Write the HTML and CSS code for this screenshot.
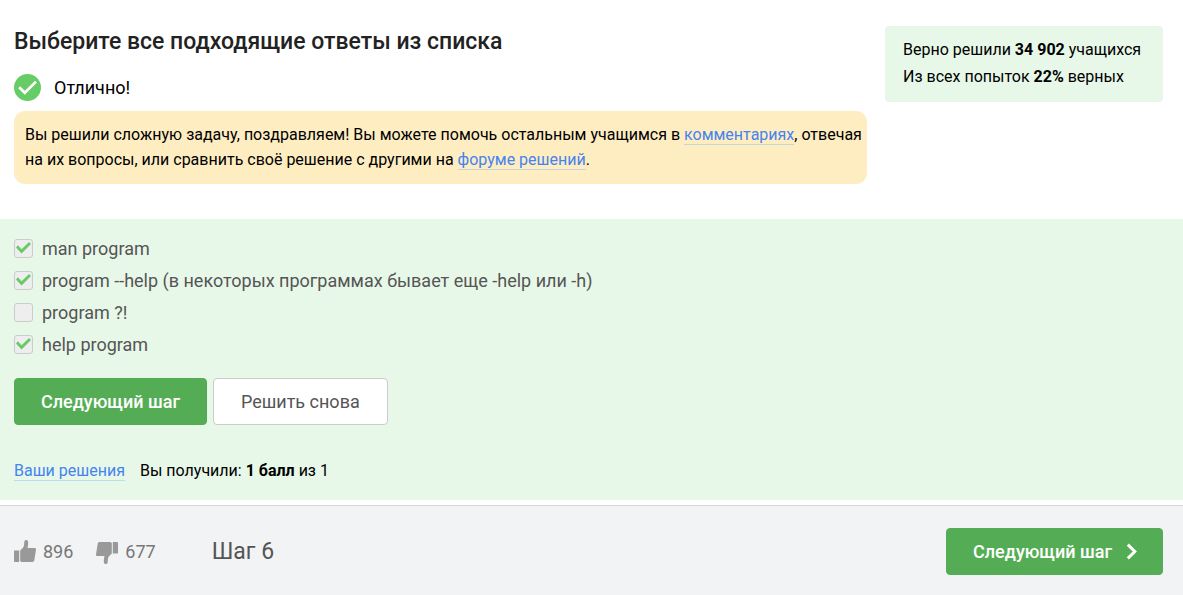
FILE: index.html
```html
<!DOCTYPE html>
<html lang="ru">
<head>
<meta charset="utf-8">
<meta name="viewport" content="width=device-width, initial-scale=1">
<title>Шаг 6</title>
<link rel="stylesheet" href="styles.css">
</head>
<body>
<main>
  <section class="intro">
    <div class="intro-main">
      <h1 class="title">Выберите все подходящие ответы из списка</h1>
      <div class="status">
        <svg class="status-icon" viewBox="0 0 27 27" aria-hidden="true"><circle cx="13.5" cy="13.5" r="13.5" fill="#66cc66"/><path d="M5.2 13.2l5.6 5.6L22 7.6" fill="none" stroke="#fff" stroke-width="2.7"/></svg>
        <span>Отлично!</span>
      </div>
      <p class="note">Вы решили сложную задачу, поздравляем! Вы можете помочь остальным учащимся в <a class="link" href="#comments">комментариях</a>, отвечая на их вопросы, или сравнить своё решение с другими на <a class="link" href="#solutions">форуме решений</a>.</p>
    </div>
    <aside class="stats">
      <div>Верно решили <b>34 902</b> учащихся</div>
      <div>Из всех попыток <b>22%</b> верных</div>
    </aside>
  </section>

  <section class="quiz">
    <div class="options">
      <label class="option"><input class="check" type="checkbox" checked disabled>man program</label>
      <label class="option"><input class="check" type="checkbox" checked disabled>program --help (в некоторых программах бывает еще -help или -h)</label>
      <label class="option"><input class="check" type="checkbox" disabled>program ?!</label>
      <label class="option"><input class="check" type="checkbox" checked disabled>help program</label>
    </div>
    <div class="actions">
      <button class="button button-primary" type="button">Следующий шаг</button>
      <button class="button button-outline" type="button">Решить снова</button>
    </div>
    <div class="result">
      <a class="link" href="#submissions">Ваши решения</a>
      <span>Вы получили: <b>1 балл</b> из 1</span>
    </div>
  </section>
</main>

<footer class="footer">
  <button class="vote" type="button" aria-label="Нравится: 896">
    <svg class="vote-icon" viewBox="0 0 22 24" aria-hidden="true"><path d="M0 10.4h5.2V22H.8a.8.8 0 0 1-.8-.8z"/><path d="M6.2 21V10.6l3.2-3.3c.8-1.5.7-3.4.9-5.3C10.5.6 11.2 0 12.1 0c1.5 0 2.1 1.2 2.1 2.6 0 1.7-.2 3.4-.7 5.4h7.300c.8 0 1.300.7 1.200 1.500l-1.700 10.800c-.2 1.100-.9 1.700-1.900 1.700H8.200c-.9 0-1.500-.3-2-1z"/></svg>
    <span>896</span>
  </button>
  <button class="vote vote-down" type="button" aria-label="Не нравится: 677">
    <svg class="vote-icon" viewBox="0 -2 22 24" aria-hidden="true"><path d="M16.800 0H21.200a.8.8 0 0 1 .8.8V11.600H16.800z"/><path d="M15.800 1v10.400l-3.200 3.300c-.8 1.500-.7 3.400-.9 5.300-.2 1.400-.9 2-1.800 2-1.500 0-2.100-1.200-2.100-2.600 0-1.700.2-3.400.7-5.400H1.200c-.8 0-1.300-.7-1.200-1.500L1.700 1.700C1.900.6 2.600 0 3.600 0h10.200c.9 0 1.500.3 2 1z"/></svg>
    <span>677</span>
  </button>
  <div class="step">Шаг 6</div>
  <button class="button button-primary button-next" type="button">
    <span>Следующий шаг</span>
    <svg class="chevron" viewBox="0 0 12 17" aria-hidden="true"><path d="M1.800 1.600l7 6.900-7 6.900" fill="none" stroke="#fff" stroke-width="3"/></svg>
  </button>
</footer>
</body>
</html>
```

FILE: styles.css
```css
* {
  box-sizing: border-box;
}

body {
  margin: 0;
  background: #fff;
  color: #000;
  font-family: Roboto, "Noto Sans", sans-serif;
  font-size: 16px;
  line-height: 25px;
}

b {
  font-weight: 700;
}

.link {
  color: #4583f0;
  text-decoration: none;
  border-bottom: 1px solid rgba(69, 161, 255, 0.3);
}

.intro {
  display: flex;
  align-items: flex-start;
  gap: 18px;
  padding: 26px 20px 35px 14px;
}

.intro-main {
  flex: 1;
}

.title {
  margin: 0;
  color: #222;
  font-size: 23px;
  font-weight: 500;
  line-height: 32px;
}

.status {
  display: flex;
  align-items: center;
  gap: 13px;
  margin: 16px 0 10px;
  font-size: 18px;
  line-height: 27px;
}

.status-icon {
  width: 27px;
  height: 27px;
}

.note {
  margin: 0;
  padding: 11px 0 12px 11px;
  border-radius: 11px;
  background: #ffedc2;
}

.stats {
  min-width: 278px;
  padding: 10px 18px 12px;
  border-radius: 4px;
  background: #e7f8e9;
  line-height: 27px;
}

.quiz {
  padding: 14px 14px 17px;
  background: #e7f8e9;
}

.options {
  color: #555;
  font-size: 18px;
  line-height: 32px;
}

.option {
  display: flex;
  align-items: flex-start;
  gap: 9px;
}

.check {
  appearance: none;
  display: grid;
  width: 19px;
  height: 19px;
  margin: 6px 0 0;
  border: 1px solid #ccc;
  border-radius: 3px;
  background: #eee;
}

.check:checked::before {
  content: "";
  width: 15px;
  height: 12px;
  margin: 2px 1px;
  background: #66cc66;
  clip-path: polygon(0 45%, 13% 28%, 37% 60%, 87% 0, 100% 16%, 37% 96%);
}

.actions {
  display: flex;
  gap: 6px;
  margin: 17px 0 33px;
}

.button {
  padding: 0 26px;
  border: 1px solid;
  border-radius: 4px;
  font: inherit;
  font-size: 18px;
  line-height: 45px;
}

.button-primary {
  border-color: #54ad54;
  background: #54ad54;
  color: #fff;
  font-weight: 500;
}

.button-outline {
  padding: 0 27px;
  border-color: #ccc;
  background: #fff;
  color: #555;
}

.result {
  display: flex;
  align-items: baseline;
  gap: 15px;
}

.result .link {
  line-height: 18px;
}

.footer {
  display: flex;
  align-items: center;
  margin-top: 5px;
  padding: 22px 20px 20px 14px;
  border-top: 1px solid #d8d8d8;
  background: #f2f3f5;
}

.vote {
  display: flex;
  align-items: center;
  gap: 7px;
  padding: 0;
  border: 0;
  background: none;
  color: #777;
  font: inherit;
  font-size: 18px;
}

.vote-down {
  margin-left: 23px;
}

.vote-icon {
  width: 22px;
  height: 24px;
  fill: #999;
}

.step {
  margin-left: 56px;
  color: #555;
  font-size: 23px;
}

.button-next {
  display: flex;
  align-items: center;
  gap: 14px;
  margin-left: auto;
  padding-right: 24px;
}

.chevron {
  width: 12px;
  height: 17px;
}
```
